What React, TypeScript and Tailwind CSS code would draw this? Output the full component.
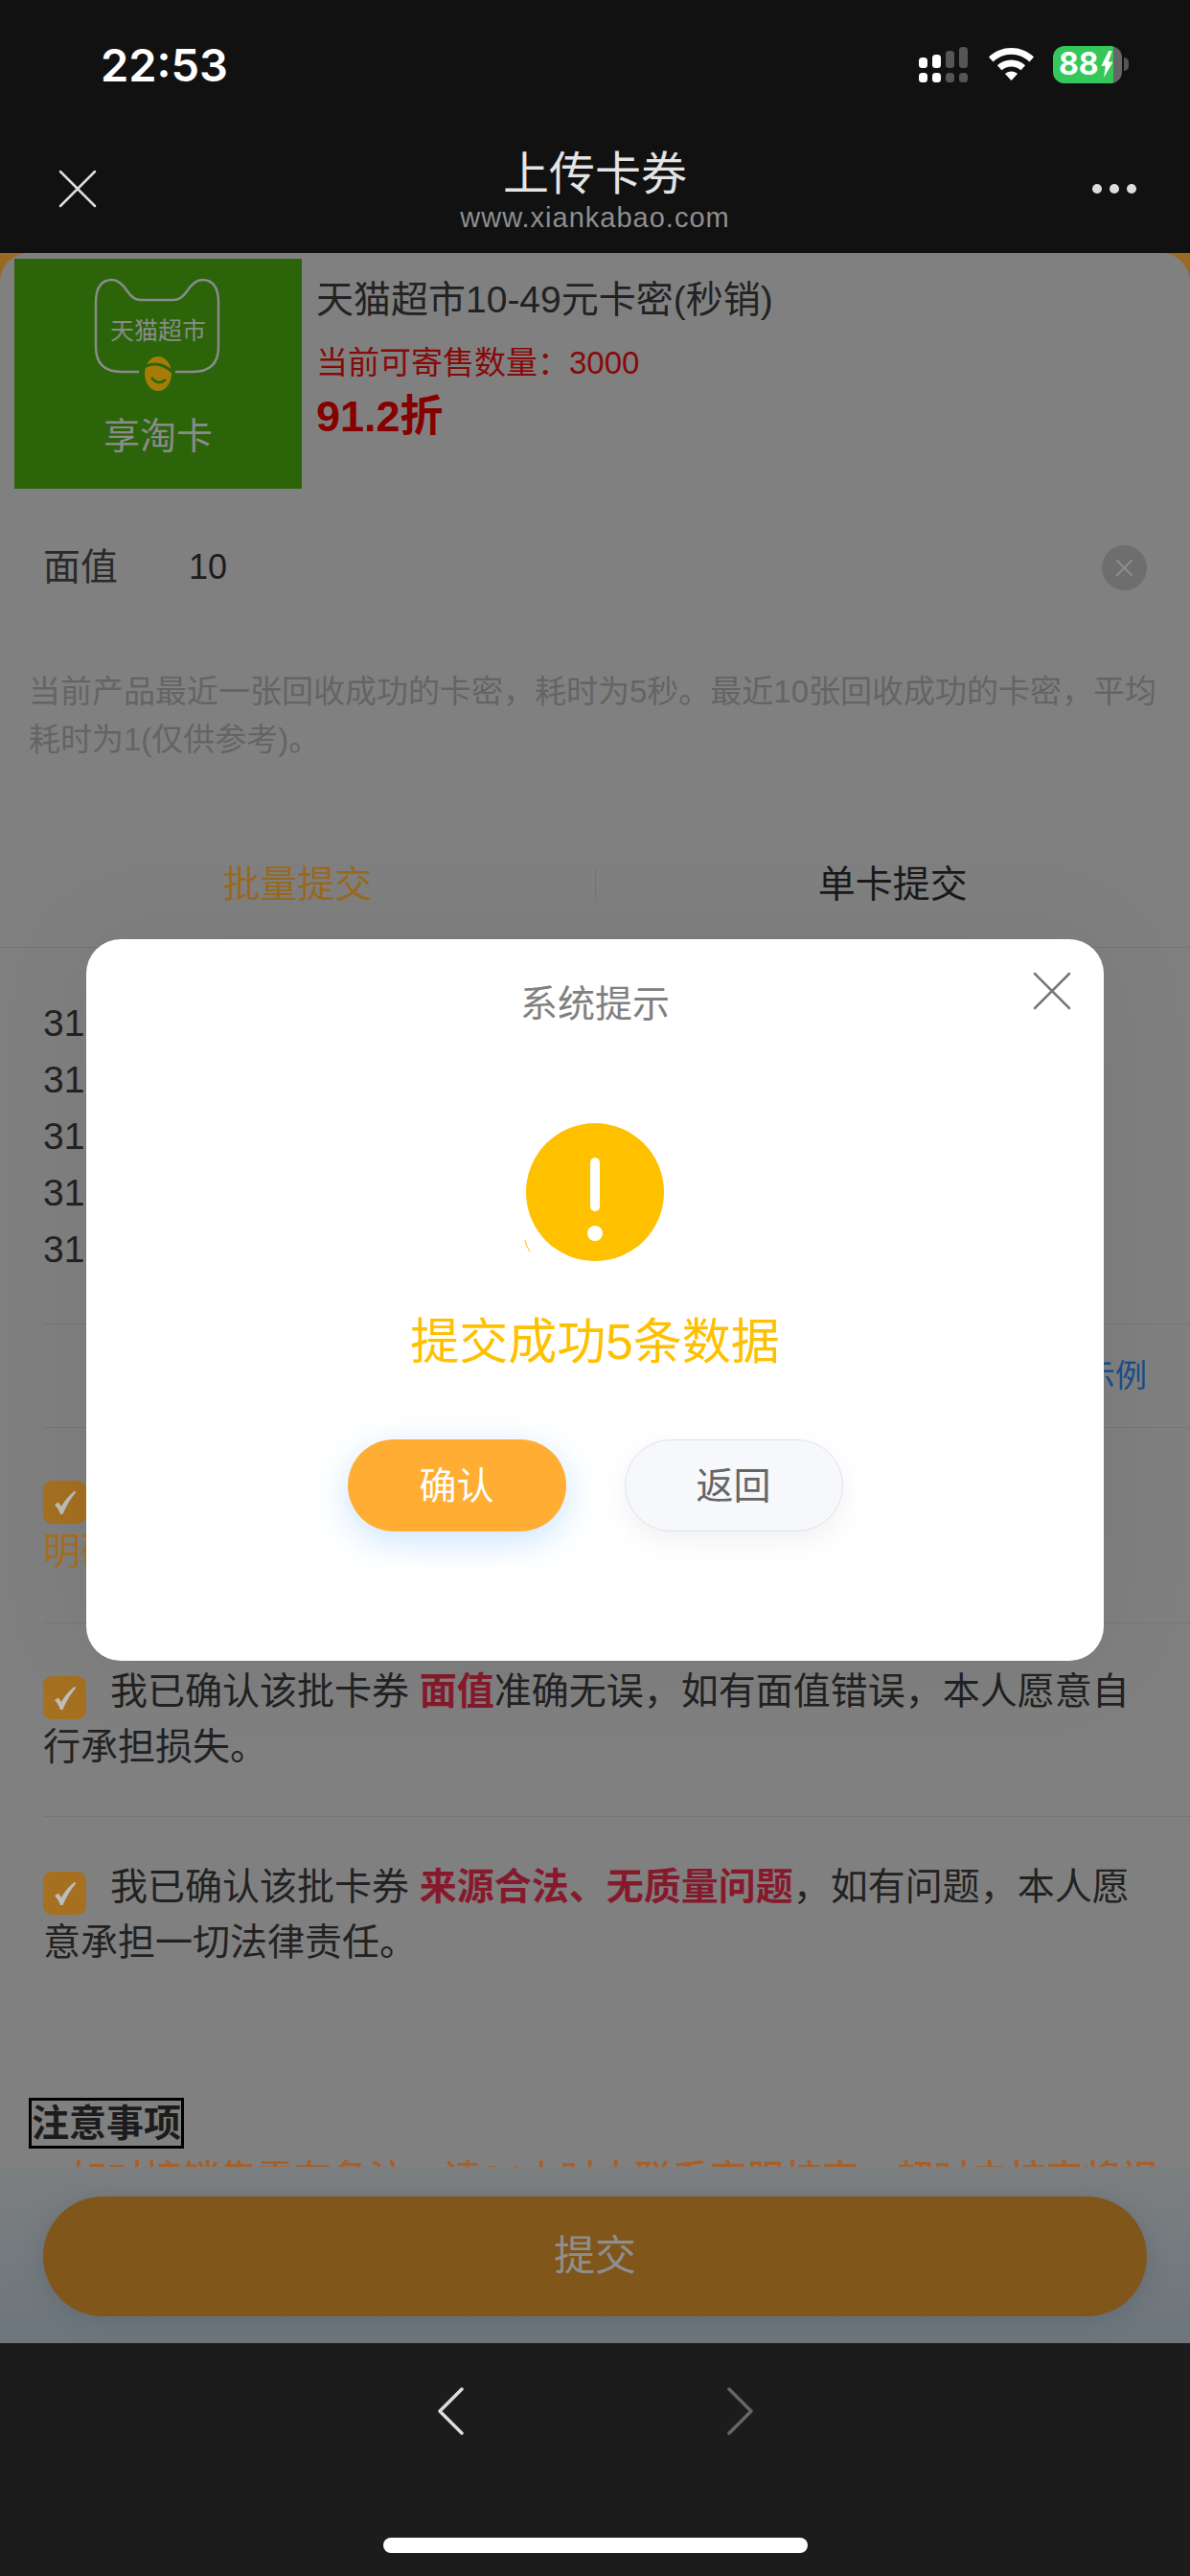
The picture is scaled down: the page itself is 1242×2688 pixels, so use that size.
import React from 'react';

const cardLines = ['3100482917365024', '3100482917365025', '3100482917365026', '3100482917365027', '3100482917365028'];

const CloseIcon = ({ size, color, width }: { size: number; color: string; width: number }) => (
  <svg width={size} height={size} viewBox="0 0 40 40" fill="none" stroke={color} strokeWidth={width} strokeLinecap="round">
    <path d="M2 2L38 38M38 2L2 38" />
  </svg>
);

const SignalIcon = () => (
  <svg width="51" height="37" viewBox="0 0 51 37" className="mr-[2px]">
    <rect x="0" y="11" width="9" height="11" rx="3.5" fill="#fff" />
    <rect x="14" y="8" width="9" height="14" rx="3.5" fill="#fff" />
    <rect x="28" y="4" width="9" height="18" rx="3.5" fill="#555" />
    <rect x="42" y="0" width="9" height="22" rx="3.5" fill="#555" />
    <rect x="0" y="27" width="9" height="10" rx="3.5" fill="#fff" />
    <rect x="14" y="27" width="9" height="10" rx="3.5" fill="#fff" />
    <rect x="28" y="27" width="9" height="10" rx="3.5" fill="#555" />
    <rect x="42" y="27" width="9" height="10" rx="3.5" fill="#555" />
  </svg>
);

const WifiIcon = () => (
  <svg width="47" height="34" viewBox="0 0 47 34" fill="#fff">
    <path d="M23.5 0C14.5 0 6.4 3.4 0 9.4l4.6 5C9.7 9.7 16.2 6.8 23.5 6.8s13.800 2.900 18.900 7.600l4.600-5C40.600 3.400 32.500 0 23.500 0z" />
    <path d="M23.500 12.600c-5.600 0-10.700 2.100-14.600 5.700l4.600 5c2.700-2.400 6.200-3.900 10-3.900s7.300 1.500 10 3.900l4.600-5c-3.900-3.600-9-5.700-14.600-5.700z" />
    <path d="M23.500 24.600c-2.500 0-4.800 .9-6.500 2.500L23.500 34l6.500-6.900c-1.700-1.600-4-2.500-6.500-2.500z" />
  </svg>
);

const BatteryIcon = () => (
  <div className="flex items-center gap-[2px]">
    <div className="flex h-[39px] w-[72px] items-center overflow-hidden rounded-[12px] bg-[linear-gradient(90deg,#34c759_63px,#666_63px)] pl-[6px] font-['Inter',sans-serif] text-[32px] font-bold leading-none text-white">
      <span>88</span>
      <svg width="15" height="28" viewBox="0 0 14 32" fill="#fff" className="ml-px shrink-0">
        <path d="M9 0L0 18h5L3 32l11-19H8.500L13 0z" />
      </svg>
    </div>
    <div className="h-[14px] w-[5px] rounded-r-full bg-[#555]" />
  </div>
);

const Checkbox = () => (
  <span className="mr-[25px] mt-[13px] inline-flex h-[45px] w-[45px] items-center justify-center rounded-[9px] bg-[#a57020] align-top">
    <svg width="26" height="26" viewBox="0 0 26 26" fill="#bdbdbd">
      <path d="M2 15L6 12.500L9 17Q14 8 22.500 1L24.500 2Q16.500 11 10.500 25L8 25Q6 19 2 15z" />
    </svg>
  </span>
);

const TmallLogo = () => (
  <svg width="300" height="150" viewBox="0 0 300 150" fill="none" className="absolute left-0 top-0">
    <path
      d="M130 118H112Q85 118 85 92V46Q85 22 102 22Q110 22 118 34Q124 43 132 43H166Q174 43 180 34Q188 22 196 22Q213 22 213 46V92Q213 118 186 118H168"
      stroke="#8b8b8b"
      strokeWidth="2.500"
    />
    <ellipse cx="150" cy="120" rx="14" ry="18" fill="#a67c08" />
    <path d="M134 114Q150 104 166 119" stroke="#2c640a" strokeWidth="3" />
    <path d="M143 124Q150 133 158 126" stroke="#2c640a" strokeWidth="2.500" />
  </svg>
);

const App: React.FC = () => {
  return (
    <div className="relative flex h-[2688px] w-[1242px] flex-col overflow-hidden bg-[#111] font-['Liberation_Sans','Noto_Sans_CJK_SC',sans-serif]">
      {/* status bar */}
      <div className="flex h-[135px] shrink-0 items-center justify-between pb-[1px] pl-[105px] pr-[64px]">
        <span className="font-['Inter',sans-serif] text-[47px] font-semibold leading-none text-white">22:53</span>
        <div className="flex items-center gap-[20px]">
          <SignalIcon />
          <WifiIcon />
          <BatteryIcon />
        </div>
      </div>

      {/* title bar */}
      <div className="grid h-[129px] shrink-0 grid-cols-[200px_1fr_200px] items-start">
        <div className="pl-[61px] pt-[42px]">
          <CloseIcon size={40} color="#ddd" width={2.500} />
        </div>
        <div className="flex flex-col items-center">
          <span className="mt-[20px] text-[48px] leading-[54px] text-[#e4e4e4]">上传卡券</span>
          <span className="mt-[3px] text-[29px] leading-[30px] tracking-[1px] text-[#8f8f8f]">www.xiankabao.com</span>
        </div>
        <div className="flex justify-end gap-[8px] pr-[56px] pt-[57px]">
          <span className="h-[10px] w-[10px] rounded-full bg-[#ddd]" />
          <span className="h-[10px] w-[10px] rounded-full bg-[#ddd]" />
          <span className="h-[10px] w-[10px] rounded-full bg-[#ddd]" />
        </div>
      </div>

      {/* page */}
      <div className="h-[1997px] shrink-0 bg-[#9a6a22]">
        <div className="h-full overflow-hidden rounded-t-[30px] bg-[#808080]">
          <div className="flex pl-[15px] pt-[6px]">
            <div className="relative h-[240px] w-[300px] shrink-0 bg-[#2c640a] text-center text-[#8b8b8b]">
              <TmallLogo />
              <div className="relative pt-[60px] text-[25px] leading-[30px]">天猫超市</div>
              <div className="relative mt-[73px] text-[38px] leading-[44px]">享淘卡</div>
            </div>
            <div className="ml-[15px]">
              <div className="mt-[20px] text-[39px] leading-[46px] text-[#222]">天猫超市10-49元卡密(秒销)</div>
              <div className="mt-[23px] text-[33px] leading-[40px] text-[#860a0a]">当前可寄售数量：3000</div>
              <div className="mt-[10px] text-[45px] font-bold leading-[52px] text-[#860000]">91.2折</div>
            </div>
          </div>

          <div className="flex h-[162px] items-center px-[45px] pt-[2px]">
            <span className="w-[152px] text-[39px] text-[#2a2a2a]">面值</span>
            <span className="flex-1 text-[36px] text-[#1c1c1c]">10</span>
            <span className="flex h-[47px] w-[47px] items-center justify-center rounded-full bg-[#6e6e6e]">
              <CloseIcon size={17} color="#8c8c8c" width={5} />
            </span>
          </div>

          <p className="mt-[25px] px-[30px] text-[33px] leading-[49.500px] text-[#646464]">
            当前产品最近一张回收成功的卡密，耗时为5秒。最近10张回收成功的卡密，平均耗时为1(仅供参考)。
          </p>

          <div className="mt-[60px] flex h-[133px] items-center border-b border-[#747474] pt-[2px] text-[39px]">
            <span className="flex-1 text-center text-[#9a6a20]">批量提交</span>
            <span className="h-[36px] w-px bg-[#767676]" />
            <span className="flex-1 text-center text-[#1a1a1a]">单卡提交</span>
          </div>

          <div className="mt-[49px] pl-[45px] text-[39px] leading-[59px] text-[#222]">
            {cardLines.map(line => (
              <div key={line}>{line}</div>
            ))}
          </div>

          <div className="ml-[45px] mt-[48px] flex h-[108px] items-center justify-end border-t border-[#767676] pr-[45px] text-[33px] text-[#174f8c]">
            查看示例
          </div>

          <div className="ml-[45px] border-t border-[#767676] pb-[45px] pr-[45px] pt-[42px] text-[39px] leading-[58px] text-[#222]">
            <Checkbox />
            <span className="text-[#a57020]">我已确认该批卡券</span>
            <div className="text-[#a57020]">明确知晓</div>
          </div>

          <div className="ml-[45px] border-t border-[#767676] pb-[43px] pr-[45px] pt-[42px] text-[39px] leading-[58px] text-[#222]">
            <Checkbox />
            我已确认该批卡券 <b className="font-bold text-[#861a2c]">面值</b>准确无误，如有面值错误，本人愿意自行承担损失。
          </div>

          <div className="ml-[45px] border-t border-[#767676] pr-[45px] pt-[44px] text-[39px] leading-[58px] text-[#222]">
            <Checkbox />
            我已确认该批卡券 <b className="font-bold text-[#861a2c]">来源合法、无质量问题</b>，如有问题，本人愿意承担一切法律责任。
          </div>

          <div className="ml-[30px] mt-[133px] w-fit border-[3px] border-black text-[39px] font-bold leading-[47px] text-[#1c1c1c]">
            注意事项
          </div>
          <div className="ml-[45px] mt-[3px] whitespace-nowrap text-[39px] font-medium leading-[58px] text-[#a8602a]">
            <span className="inline-block w-[28px] align-[11px] text-[22px] leading-none text-[#1c1c1c]">▲</span>
            如对接销售需有备注，请24小时内联系客服核实，超时未核实将视
          </div>
        </div>
      </div>

      {/* submit bar */}
      <div className="h-[184px] shrink-0 bg-[linear-gradient(180deg,#7c7f80,#6d767d)] px-[45px] pt-[31px]">
        <div className="flex h-[125px] items-center justify-center rounded-full bg-[#80561a] text-[43px] text-[#8e8e8e] shadow-[0_4px_24px_rgba(60,70,80,0.25)]">
          提交
        </div>
      </div>

      {/* browser toolbar */}
      <div className="flex flex-1 flex-col items-center bg-[#1c1c1c] pt-[46px]">
        <div className="flex gap-[275px]">
          <svg width="27" height="50" viewBox="0 0 27 50" fill="none" stroke="#ddd" strokeWidth="3.500" strokeLinecap="round" strokeLinejoin="round">
            <path d="M25 2L2 25L25 48" />
          </svg>
          <svg width="27" height="50" viewBox="0 0 27 50" fill="none" stroke="#666" strokeWidth="3.500" strokeLinecap="round" strokeLinejoin="round">
            <path d="M2 2L25 25L2 48" />
          </svg>
        </div>
        <div className="mt-[107px] h-[16px] w-[443px] rounded-full bg-white" />
      </div>

      {/* dialog */}
      <div className="absolute left-[90px] top-[980px] flex h-[753px] w-[1062px] flex-col items-center rounded-[36px] bg-white shadow-[0_0_110px_rgba(0,0,0,0.07)]">
        <div className="absolute right-[34px] top-[34px]">
          <CloseIcon size={40} color="#777" width={2.500} />
        </div>
        <div className="mt-[45px] text-[39px] leading-[46px] text-[#808080]">系统提示</div>
        <svg width="144" height="144" viewBox="0 0 144 144" className="mt-[101px] shrink-0 overflow-visible">
          <circle cx="72" cy="72" r="72" fill="#ffc000" />
          <rect x="67" y="36" width="10" height="56" rx="5" fill="#fff" />
          <circle cx="72" cy="115" r="8" fill="#fff" />
          <path d="M-1 122Q0 128 4 134" stroke="#ffc000" strokeWidth="1" fill="none" />
        </svg>
        <div className="mt-[55px] text-[51px] leading-[60px] text-[#ffc000]">提交成功5条数据</div>
        <div className="mt-[71px] flex gap-[61px] text-[39px]">
          <div className="flex h-[96px] w-[228px] items-center justify-center rounded-full bg-[#ffad33] pt-[3px] text-white shadow-[0_10px_36px_rgba(140,195,255,0.45)]">
            确认
          </div>
          <div className="flex h-[96px] w-[228px] items-center justify-center rounded-full border border-[#dfe3ec] bg-[#f6f8fc] pt-[3px] text-[#666] shadow-[0_10px_30px_rgba(0,0,0,0.06)]">
            返回
          </div>
        </div>
      </div>
    </div>
  );
};

export default App;
